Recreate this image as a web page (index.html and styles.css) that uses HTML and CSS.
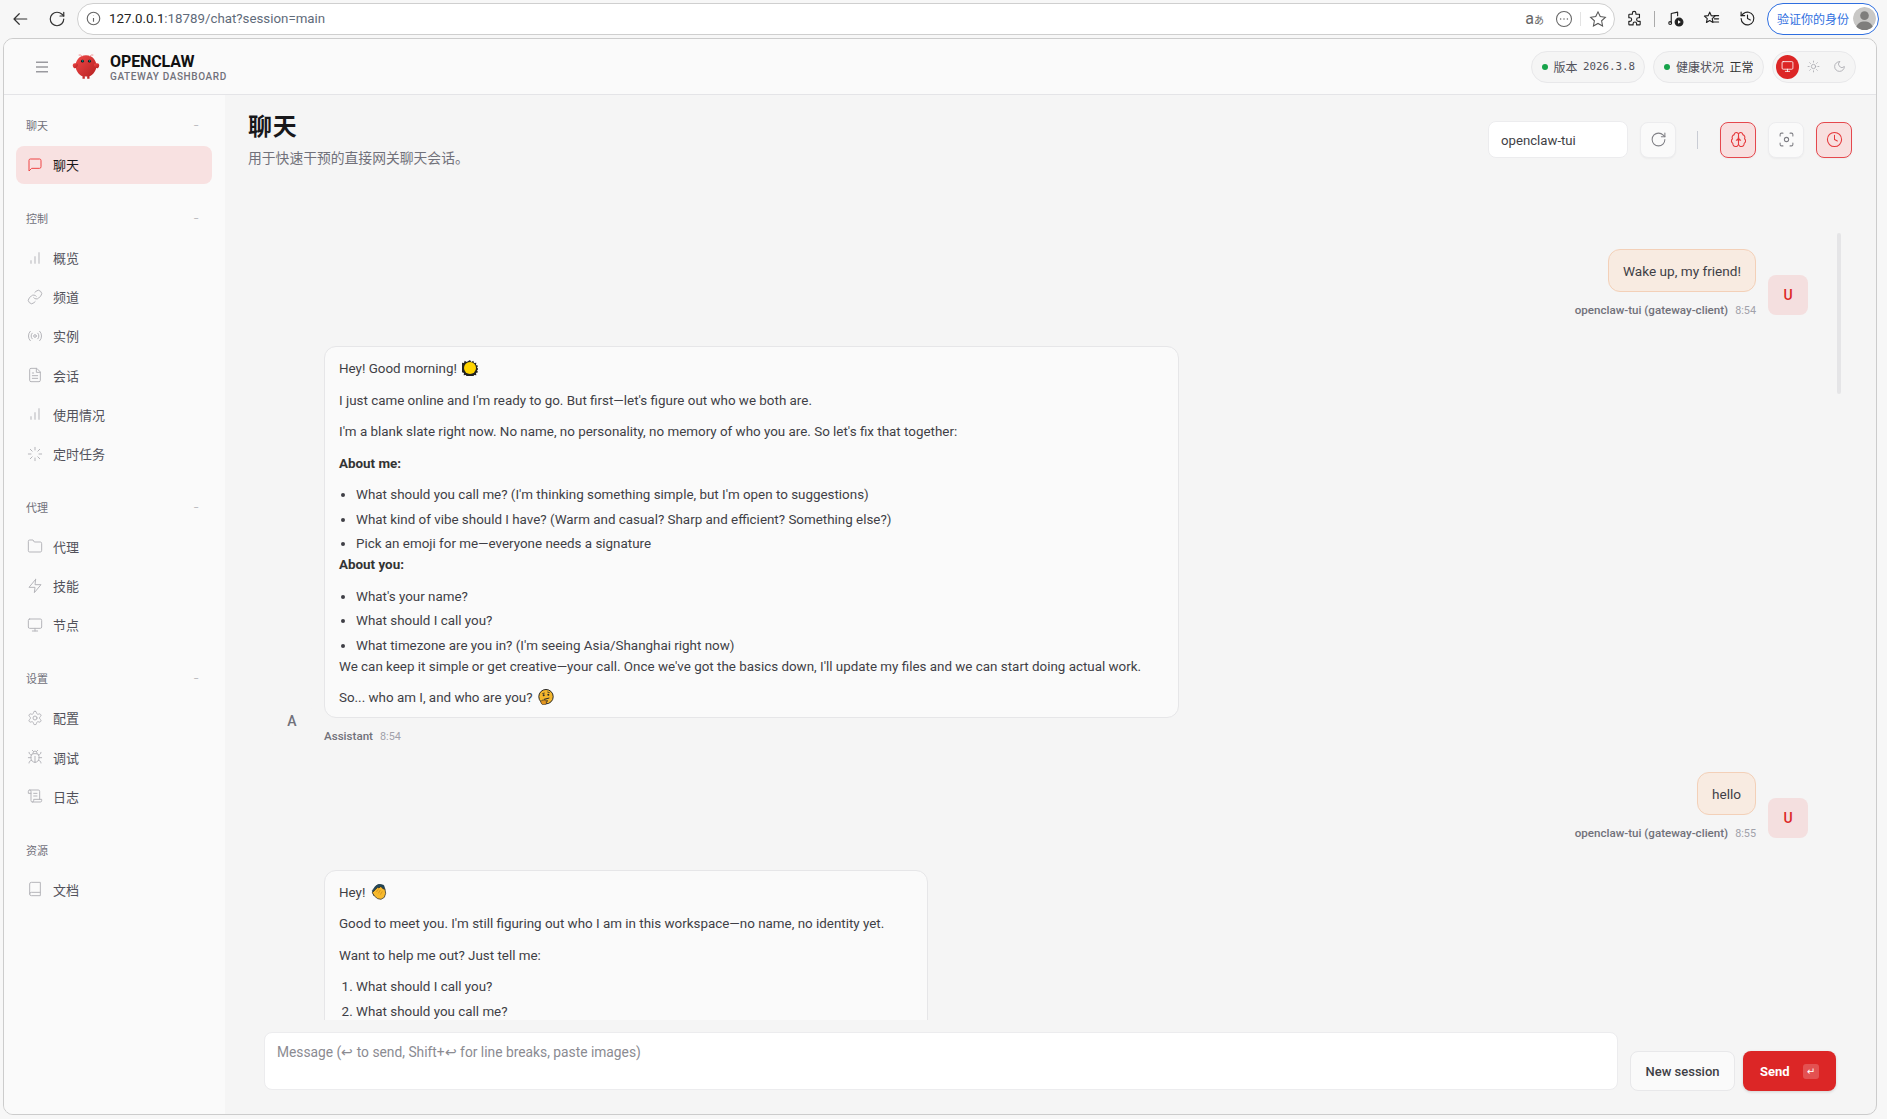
FILE: index.html
```html
<!DOCTYPE html>
<html lang="zh-CN">
<head>
<meta charset="utf-8">
<title>OpenClaw</title>
<link rel="stylesheet" href="styles.css">
</head>
<body>
<svg class="defs" width="0" height="0" aria-hidden="true">
  <symbol id="i-chat" viewBox="0 0 24 24"><path d="M21 15a2 2 0 0 1-2 2H7l-4 4V5a2 2 0 0 1 2-2h14a2 2 0 0 1 2 2z"/></symbol>
  <symbol id="i-bars" viewBox="0 0 24 24"><path d="M12 20V10M18 20V4M6 20v-4"/></symbol>
  <symbol id="i-link" viewBox="0 0 24 24"><path d="M10 13a5 5 0 0 0 7.54.54l3-3a5 5 0 0 0-7.07-7.07l-1.72 1.71"/><path d="M14 11a5 5 0 0 0-7.54-.54l-3 3a5 5 0 0 0 7.07 7.07l1.71-1.71"/></symbol>
  <symbol id="i-radio" viewBox="0 0 24 24"><circle cx="12" cy="12" r="2"/><path d="M16.24 7.76a6 6 0 0 1 0 8.49m-8.48-.01a6 6 0 0 1 0-8.49m11.31-2.82a10 10 0 0 1 0 14.14m-14.14 0a10 10 0 0 1 0-14.14"/></symbol>
  <symbol id="i-file" viewBox="0 0 24 24"><path d="M14 2H6a2 2 0 0 0-2 2v16a2 2 0 0 0 2 2h12a2 2 0 0 0 2-2V8z"/><path d="M14 2v6h6M16 13H8M16 17H8M10 9H8"/></symbol>
  <symbol id="i-loader" viewBox="0 0 24 24"><path d="M12 2v4M12 18v4M4.93 4.93l2.83 2.83M16.24 16.24l2.83 2.83M2 12h4M18 12h4M4.93 19.07l2.83-2.83M16.24 7.76l2.83-2.83"/></symbol>
  <symbol id="i-folder" viewBox="0 0 24 24"><path d="M22 19a2 2 0 0 1-2 2H4a2 2 0 0 1-2-2V5a2 2 0 0 1 2-2h5l2 3h9a2 2 0 0 1 2 2z"/></symbol>
  <symbol id="i-zap" viewBox="0 0 24 24"><path d="M13 2 3 14h9l-1 8 10-12h-9l1-8z"/></symbol>
  <symbol id="i-monitor" viewBox="0 0 24 24"><rect x="2" y="3" width="20" height="14" rx="2"/><path d="M8 21h8M12 17v4"/></symbol>
  <symbol id="i-gear" viewBox="0 0 24 24"><path d="M12.22 2h-.44a2 2 0 0 0-2 2v.18a2 2 0 0 1-1 1.73l-.43.25a2 2 0 0 1-2 0l-.15-.08a2 2 0 0 0-2.73.73l-.22.38a2 2 0 0 0 .73 2.73l.15.1a2 2 0 0 1 1 1.72v.51a2 2 0 0 1-1 1.74l-.15.09a2 2 0 0 0-.73 2.73l.22.38a2 2 0 0 0 2.73.73l.15-.08a2 2 0 0 1 2 0l.43.25a2 2 0 0 1 1 1.73V20a2 2 0 0 0 2 2h.44a2 2 0 0 0 2-2v-.18a2 2 0 0 1 1-1.73l.43-.25a2 2 0 0 1 2 0l.15.08a2 2 0 0 0 2.73-.73l.22-.39a2 2 0 0 0-.73-2.73l-.15-.08a2 2 0 0 1-1-1.74v-.5a2 2 0 0 1 1-1.74l.15-.09a2 2 0 0 0 .73-2.73l-.22-.38a2 2 0 0 0-2.73-.73l-.15.08a2 2 0 0 1-2 0l-.43-.25a2 2 0 0 1-1-1.73V4a2 2 0 0 0-2-2z"/><circle cx="12" cy="12" r="3"/></symbol>
  <symbol id="i-bug" viewBox="0 0 24 24"><path d="m8 2 1.88 1.88M14.12 3.88 16 2M9 7.13v-1a3 3 0 1 1 6 0v1M12 20c-3.3 0-6-2.7-6-6v-3a4 4 0 0 1 4-4h4a4 4 0 0 1 4 4v3c0 3.3-2.7 6-6 6M12 20v-9M6.53 9C4.6 8.8 3 7.1 3 5M6 13H2M3 21c0-2.1 1.7-3.9 3.8-4M20.97 5c0 2.1-1.6 3.8-3.5 4M22 13h-4M17.2 17c2.1.1 3.8 1.9 3.8 4"/></symbol>
  <symbol id="i-scroll" viewBox="0 0 24 24"><path d="M8 21h12a2 2 0 0 0 2-2v-2H10v2a2 2 0 1 1-4 0V5a2 2 0 1 0-4 0v3h4"/><path d="M19 17V5a2 2 0 0 0-2-2H4M15 8h-5M15 12h-5"/></symbol>
  <symbol id="i-book" viewBox="0 0 24 24"><path d="M4 19.5v-15A2.5 2.5 0 0 1 6.5 2H20v20H6.5a2.5 2.5 0 0 1 0-5H20"/></symbol>
  <symbol id="i-brain" viewBox="0 0 24 24"><path d="M12 5a3 3 0 1 0-5.997.125 4 4 0 0 0-2.526 5.77 4 4 0 0 0 .556 6.588A4 4 0 1 0 12 18Z"/><path d="M12 5a3 3 0 1 1 5.997.125 4 4 0 0 1 2.526 5.77 4 4 0 0 1-.556 6.588A4 4 0 1 1 12 18Z"/><path d="M12 5v13M15 13a4.500 4.500 0 0 1-3-4 4.500 4.500 0 0 1-3 4"/></symbol>
  <symbol id="i-scan" viewBox="0 0 24 24"><path d="M3 7V5a2 2 0 0 1 2-2h2M17 3h2a2 2 0 0 1 2 2v2M21 17v2a2 2 0 0 1-2 2h-2M7 21H5a2 2 0 0 1-2-2v-2"/><circle cx="12" cy="12" r="3"/></symbol>
  <symbol id="i-clock" viewBox="0 0 24 24"><circle cx="12" cy="12" r="10"/><path d="M12 6v6l4 2"/></symbol>
  <symbol id="i-refresh" viewBox="0 0 24 24"><path d="M21 12a9 9 0 1 1-9-9c2.520 0 4.930 1 6.740 2.740L21 8"/><path d="M21 3v5h-5"/></symbol>
  <symbol id="i-sun" viewBox="0 0 24 24"><circle cx="12" cy="12" r="4"/><path d="M12 2v2M12 20v2M4.930 4.930l1.410 1.410M17.660 17.660l1.410 1.410M2 12h2M20 12h2M6.340 17.660l-1.410 1.410M19.070 4.930l-1.410 1.410"/></symbol>
  <symbol id="i-moon" viewBox="0 0 24 24"><path d="M12 3a6 6 0 0 0 9 9 9 9 0 1 1-9-9Z"/></symbol>
</svg>

<div class="chrome">
  <svg class="cicon cicon-first" viewBox="0 0 24 24"><path d="M21 12H4M11 5l-7 7 7 7"/></svg>
  <svg class="cicon" viewBox="0 0 24 24"><use href="#i-refresh"/></svg>
  <div class="omni">
    <svg class="omni-info" viewBox="0 0 24 24"><circle cx="12" cy="12" r="10"/><path d="M12 17v-6M12 8v-.5"/></svg>
    <span class="url"><span class="url-host">127.0.0.1</span>:18789/chat?session=main</span>
    <span class="tr-icon">a<small>あ</small></span>
    <svg class="omni-ic" viewBox="0 0 24 24"><circle cx="12" cy="12" r="10"/><circle class="omni-dot" cx="7.500" cy="12" r="1"/><circle class="omni-dot" cx="12" cy="12" r="1"/><circle class="omni-dot" cx="16.500" cy="12" r="1"/></svg>
    <span class="omni-sep"></span>
    <svg class="omni-ic omni-star" viewBox="0 0 24 24"><path d="m12 2.500 3 6.300 6.800.9-5 4.700 1.300 6.800-6.100-3.300-6.100 3.300 1.300-6.800-5-4.700 6.800-.9z"/></svg>
  </div>
  <svg class="cicon dark" viewBox="0 0 24 24"><path d="M9 4.500a2.500 2.500 0 0 1 5 0V6h5v5h-1.500a2.500 2.500 0 0 0 0 5H20v4a1 1 0 0 1-1 1h-4v-1.500a2.500 2.500 0 0 0-5 0V21H5a1 1 0 0 1-1-1v-4h1.500a2.500 2.500 0 0 0 0-5H4V7a1 1 0 0 1 1-1h4z"/></svg>
  <span class="chrome-sep"></span>
  <svg class="cicon dark" viewBox="0 0 24 24"><path d="M6 18V5l9-2v5"/><circle cx="4.500" cy="18.500" r="2"/><circle cx="17" cy="17" r="5.500" fill="#222"/><path class="play" d="m15.500 14.500 4 2.500-4 2.500z"/></svg>
  <svg class="cicon dark" viewBox="0 0 24 24"><path d="m9.500 3 2.200 5 5.300.6-4 3.600 1.100 5.300-4.600-2.700-4.600 2.700 1.100-5.300-4-3.600 5.300-.6zM16 8h6M16 12.500h6M15 17h7"/></svg>
  <svg class="cicon dark" viewBox="0 0 24 24"><path d="M3 12a9 9 0 1 0 3-6.700L3 8"/><path d="M3 3v5h5M12 7v5l4 2"/></svg>
  <div class="verify">
    <span>验证你的身份</span>
    <svg class="verify-avatar" viewBox="0 0 24 24"><circle cx="12" cy="12" r="12" fill="#c9c8c6"/><circle cx="12" cy="9" r="4.500" fill="#7f7e7c"/><path d="M3 22c1-5 5-7 9-7s8 2 9 7c-5 3-13 3-18 0z" fill="#7f7e7c"/></svg>
  </div>
</div>

<div class="app">
  <header class="topbar">
    <svg class="burger" viewBox="0 0 24 24"><path d="M3 5h18M3 12h18M3 19h18"/></svg>
    <svg class="logo" viewBox="0 0 120 120">
      <defs><linearGradient id="lg" x1="0" y1="0" x2="1" y2="1"><stop offset="0" stop-color="#f04848"/><stop offset="1" stop-color="#b32020"/></linearGradient></defs>
      <path fill="url(#lg)" d="M60 10C30 10 15 35 15 55c0 20 15 40 30 45v10h10v-10s5 2 10 0v10h10v-10c15-5 30-25 30-45 0-20-15-45-45-45z"/>
      <path fill="url(#lg)" d="M20 45C5 40 0 50 5 60c5 10 15 5 20-5 3-7 0-10-5-10z"/>
      <path fill="url(#lg)" d="M100 45c15-5 20 5 15 15-5 10-15 5-20-5-3-7 0-10 5-10z"/>
      <path class="logo-ant" d="M45 15Q35 5 30 8M75 15q10-10 15-7"/>
      <circle cx="45" cy="35" r="6" fill="#05141a"/><circle cx="75" cy="35" r="6" fill="#05141a"/>
      <circle cx="46" cy="34" r="2.500" fill="#00e5cc"/><circle cx="76" cy="34" r="2.500" fill="#00e5cc"/>
    </svg>
    <div class="brand">
      <div class="brand-name">OPENCLAW</div>
      <div class="brand-sub">GATEWAY DASHBOARD</div>
    </div>
    <div class="topbar-right">
      <div class="pill"><i class="dot"></i><span>版本</span><span class="mono">2026.3.8</span></div>
      <div class="pill"><i class="dot"></i><span>健康状况</span><span class="pill-val">正常</span></div>
      <div class="pill theme">
        <span class="theme-btn active"><svg class="ic"><use href="#i-monitor"/></svg></span>
        <span class="theme-btn"><svg class="ic"><use href="#i-sun"/></svg></span>
        <span class="theme-btn"><svg class="ic"><use href="#i-moon"/></svg></span>
      </div>
    </div>
  </header>
  <div class="body">
    <nav class="side">
      <section class="nav-sec">
        <div class="nav-label"><span>聊天</span><span class="dash">−</span></div>
        <a class="nav-item active"><svg class="ic"><use href="#i-chat"/></svg><span>聊天</span></a>
      </section>
      <section class="nav-sec">
        <div class="nav-label"><span>控制</span><span class="dash">−</span></div>
        <a class="nav-item"><svg class="ic"><use href="#i-bars"/></svg><span>概览</span></a>
        <a class="nav-item"><svg class="ic"><use href="#i-link"/></svg><span>频道</span></a>
        <a class="nav-item"><svg class="ic"><use href="#i-radio"/></svg><span>实例</span></a>
        <a class="nav-item"><svg class="ic"><use href="#i-file"/></svg><span>会话</span></a>
        <a class="nav-item"><svg class="ic"><use href="#i-bars"/></svg><span>使用情况</span></a>
        <a class="nav-item"><svg class="ic"><use href="#i-loader"/></svg><span>定时任务</span></a>
      </section>
      <section class="nav-sec">
        <div class="nav-label"><span>代理</span><span class="dash">−</span></div>
        <a class="nav-item"><svg class="ic"><use href="#i-folder"/></svg><span>代理</span></a>
        <a class="nav-item"><svg class="ic"><use href="#i-zap"/></svg><span>技能</span></a>
        <a class="nav-item"><svg class="ic"><use href="#i-monitor"/></svg><span>节点</span></a>
      </section>
      <section class="nav-sec">
        <div class="nav-label"><span>设置</span><span class="dash">−</span></div>
        <a class="nav-item"><svg class="ic"><use href="#i-gear"/></svg><span>配置</span></a>
        <a class="nav-item"><svg class="ic"><use href="#i-bug"/></svg><span>调试</span></a>
        <a class="nav-item"><svg class="ic"><use href="#i-scroll"/></svg><span>日志</span></a>
      </section>
      <section class="nav-sec">
        <div class="nav-label"><span>资源</span></div>
        <a class="nav-item"><svg class="ic"><use href="#i-book"/></svg><span>文档</span></a>
      </section>
    </nav>
    <main class="main">
      <div class="page-head">
        <div>
          <h1>聊天</h1>
          <p class="page-sub">用于快速干预的直接网关聊天会话。</p>
        </div>
        <div class="actions">
          <div class="session-input">openclaw-tui</div>
          <button class="sq"><svg class="ic big"><use href="#i-refresh"/></svg></button>
          <span class="act-sep"></span>
          <button class="sq on"><svg class="ic big"><use href="#i-brain"/></svg></button>
          <button class="sq"><svg class="ic big"><use href="#i-scan"/></svg></button>
          <button class="sq on"><svg class="ic big"><use href="#i-clock"/></svg></button>
        </div>
      </div>

      <div class="thread">
        <div class="thumb"></div>

        <div class="group user">
          <div class="col">
            <div class="bubble">Wake up, my friend!</div>
            <div class="meta"><b>openclaw-tui (gateway-client)</b><time>8:54</time></div>
          </div>
          <div class="avatar">U</div>
        </div>

        <div class="group bot">
          <div class="avatar">A</div>
          <div class="col">
            <div class="bubble long">
              <p>Hey! Good morning! <svg class="emoji" viewBox="0 0 24 24"><path fill="#222" d="m12 0 2 3 3-2 1 3.500 3.500-.5-.5 3.500 3 1-1.500 3 2.500 2-2.500 2 1.500 3-3 1 .5 3.500-3.500-.5-1 3.500-3-2-2 3-2-3-3 2-1-3.500-3.500.5.5-3.500-3-1-1.500-3-2.500-2 2.500-2-1.500-3 3-1-.5-3.500 3.500.5 1-3.500 3 2z"/><circle cx="12" cy="12" r="9" fill="#ffd400"/></svg></p>
              <p>I just came online and I'm ready to go. But first—let's figure out who we both are.</p>
              <p>I'm a blank slate right now. No name, no personality, no memory of who you are. So let's fix that together:</p>
              <p><strong>About me:</strong></p>
              <ul>
                <li>What should you call me? (I'm thinking something simple, but I'm open to suggestions)</li>
                <li>What kind of vibe should I have? (Warm and casual? Sharp and efficient? Something else?)</li>
                <li>Pick an emoji for me—everyone needs a signature</li>
              </ul>
              <p><strong>About you:</strong></p>
              <ul>
                <li>What's your name?</li>
                <li>What should I call you?</li>
                <li>What timezone are you in? (I'm seeing Asia/Shanghai right now)</li>
              </ul>
              <p>We can keep it simple or get creative—your call. Once we've got the basics down, I'll update my files and we can start doing actual work.</p>
              <p>So... who am I, and who are you? <svg class="emoji" viewBox="0 0 24 24"><circle cx="12" cy="11.500" r="10.800" fill="#f4b62c" stroke="#2b2b2b" stroke-width="1.500"/><path d="M6.500 7 10 6M14 4.500l3.500 1" stroke="#2b2b2b" stroke-width="1.300" fill="none"/><circle cx="8.500" cy="9.500" r="1.500" fill="#2b2b2b"/><circle cx="15.500" cy="8.500" r="1.500" fill="#2b2b2b"/><path d="M9 15.500 17 13.500" stroke="#2b2b2b" stroke-width="1.500" fill="none"/><path d="M4 19c2-3 4-3 9-2 3 .5 2 2-1 2l1 2c0 2-3 2.500-5 2.500-2 0-3.500-2-4-4.500z" fill="#e3951f" stroke="#2b2b2b" stroke-width="1"/></svg></p>
            </div>
            <div class="meta"><b>Assistant</b><time>8:54</time></div>
          </div>
        </div>

        <div class="group user">
          <div class="col">
            <div class="bubble">hello</div>
            <div class="meta"><b>openclaw-tui (gateway-client)</b><time>8:55</time></div>
          </div>
          <div class="avatar">U</div>
        </div>

        <div class="group bot">
          <div class="avatar"></div>
          <div class="col">
            <div class="bubble wide">
              <p>Hey! <svg class="emoji" viewBox="0 0 24 24"><path d="M2 10 7 3l5-3 7 2 2 6-9 10-8-1z" fill="#24495a" stroke="#16303b" stroke-width="1"/><path d="M2 13l5-5 3-3 2 1 2-2 2 1 2 2 3 1 1 6-2 6-5 3-5-1-5-4z" fill="#f7b92c" stroke="#2b2b2b" stroke-width="1.100"/><path d="m8 12 3-4M11 14l3-5M14 16l3-5" stroke="#c9861a" stroke-width="1" fill="none"/></svg></p>
              <p>Good to meet you. I'm still figuring out who I am in this workspace—no name, no identity yet.</p>
              <p>Want to help me out? Just tell me:</p>
              <ol>
                <li>What should I call you?</li>
                <li>What should you call me?</li>
              </ol>
            </div>
          </div>
        </div>
      </div>

      <div class="compose">
        <textarea class="compose-input" placeholder="Message (↩ to send, Shift+↩ for line breaks, paste images)"></textarea>
        <button class="btn">New session</button>
        <button class="btn send">Send<kbd>↵</kbd></button>
      </div>
    </main>
  </div>
</div>
</body>
</html>
```

FILE: styles.css
```css
* { box-sizing: border-box; }
html, body { margin: 0; height: 100%; }
body {
  height: 1119px;
  overflow: hidden;
  display: flex;
  flex-direction: column;
  background: #f7f7f7;
  font-family: Roboto, "Noto Sans CJK SC", sans-serif;
  font-size: 14px;
  color: #3f3f46;
}
.defs { position: absolute; }

/* browser chrome */
.chrome { height: 37px; flex: none; display: flex; align-items: center; padding-right: 7px; }
.cicon { width: 18px; height: 18px; fill: none; stroke: #333; stroke-width: 1.600; stroke-linecap: round; stroke-linejoin: round; flex: none; }
.cicon-first { margin: 0 0 0 11px; }
.cicon + .cicon { margin-left: 19px; }
.cicon.dark { stroke: #222; width: 17px; height: 17px; }
.cicon .play { fill: #fff; stroke: none; }
.omni {
  margin-left: 11px;
  width: 1538px;
  height: 32px;
  display: flex;
  align-items: center;
  background: #fff;
  border: 1px solid #cfcfcf;
  border-radius: 16px;
  padding: 0 7px 0 8px;
  flex: none;
}
.omni-info { width: 15px; height: 15px; fill: none; stroke: #666; stroke-width: 1.800; margin: 0 8px 0 0; flex: none; }
.url { flex: 1; font-size: 13.300px; color: #5f6b7a; }
.url-host { color: #222; }
.tr-icon { font-size: 16px; color: #666; line-height: 1; margin-right: 11px; }
.tr-icon small { font-size: 10px; }
.omni-ic { width: 18px; height: 18px; fill: none; stroke: #666; stroke-width: 1.400; flex: none; }
.omni-dot { fill: #666; stroke: none; }
.omni-sep { width: 1px; height: 14px; background: #e3e3e3; margin: 0 8px 0 7px; flex: none; }
.omni-star { stroke: #555; }
.omni + .cicon { margin-left: 11px; }
.chrome-sep { width: 1px; height: 16px; background: #aaa; margin: 0 12px 0 11px; flex: none; }
.chrome-sep + .cicon { margin-left: 0; }
.verify {
  margin-left: 11px;
  flex: none;
  width: 112px;
  height: 32px;
  border: 1px solid #2f6fe0;
  border-radius: 16px;
  display: flex;
  align-items: center;
  justify-content: space-between;
  padding: 0 2px 0 9px;
  color: #2f6fe0;
  font-size: 12px;
  background: #fff;
}
.verify-avatar { width: 23px; height: 23px; border-radius: 50%; flex: none; }

/* app frame */
.app {
  margin: 1px 10px 4px 3px;
  flex: 1;
  min-height: 0;
  display: flex;
  flex-direction: column;
  border: 1px solid #cccccc;
  border-radius: 10px;
  overflow: hidden;
  background: #f5f5f5;
}
.topbar {
  height: 56px;
  flex: none;
  display: flex;
  align-items: center;
  background: #fafafa;
  border-bottom: 1px solid #e4e4e7;
  padding: 0 20px 0 30px;
}
.burger { width: 16px; height: 16px; fill: none; stroke: #9a9a9f; stroke-width: 2.200; flex: none; }
.logo { width: 28px; height: 28px; margin-left: 22px; flex: none; }
.logo-ant { stroke: #ef6b6b; stroke-width: 3; fill: none; stroke-linecap: round; }
.brand { margin: 2px 0 0 10px; }
.brand-name { font-size: 16px; font-weight: 700; line-height: 17px; color: #111; letter-spacing: -.1px; }
.brand-sub { font-size: 10px; line-height: 13px; letter-spacing: .6px; color: #71717a; font-weight: 500; }
.topbar-right { margin-left: auto; display: flex; gap: 8.500px; align-items: center; }
.pill {
  height: 32px;
  display: flex;
  align-items: center;
  gap: 5.500px;
  padding: 0 9px 0 10px;
  border: 1px solid #e8e8ea;
  border-radius: 16px;
  background: #f5f5f5;
  font-size: 12px;
  color: #52525b;
}
.dot { width: 6px; height: 6px; border-radius: 50%; background: #16a34a; flex: none; }
.mono { font-family: "DejaVu Sans Mono", monospace; font-size: 10.800px; }
.pill-val { color: #333; }
.theme { padding: 0 3px; gap: 2px; width: 84px; }
.theme-btn { width: 24px; height: 24px; border-radius: 50%; display: flex; align-items: center; justify-content: center; color: #a8a8ae; margin-right: 1px; }
.theme-btn.active { background: #dc2626; color: #fff; }
.ic { width: 16px; height: 16px; fill: none; stroke: currentColor; stroke-width: 1.500; stroke-linecap: round; stroke-linejoin: round; flex: none; }
.theme-btn .ic { width: 13px; height: 13px; }
.ic.big { width: 17px; height: 17px; }

.body { flex: 1; min-height: 0; display: flex; }

/* sidebar */
.side {
  width: 221px;
  flex: none;
  background: #fafafa;
  padding: 20.600px 13px 0 12px;
  display: flex;
  flex-direction: column;
  gap: 25px;
}
.nav-sec { display: flex; flex-direction: column; gap: 1.200px; }
.nav-label {
  height: 20px;
  margin-bottom: 8.800px;
  padding: 0 13px 1px 10px;
  display: flex;
  justify-content: space-between;
  align-items: center;
  font-size: 11px;
  color: #71717a;
}
.dash { color: #b0b0b5; font-size: 10px; }
.nav-item {
  height: 38px;
  display: flex;
  align-items: center;
  gap: 10px;
  padding: 0 11px;
  border-radius: 8px;
  font-size: 13px;
  color: #52525b;
}
.nav-item .ic { color: #b5b5ba; }
.nav-item.active { background: #f8e1e1; color: #18181b; }
.nav-item.active .ic { color: #ef4444; }

/* main */
.main { flex: 1; min-width: 0; display: flex; flex-direction: column; padding: 0 24px 0 23px; }
.page-head { flex: none; height: 85px; padding-top: 16px; display: flex; justify-content: space-between; align-items: flex-start; }
h1 { margin: 0; font-size: 24px; line-height: 32px; font-weight: 700; color: #18181b; letter-spacing: .8px; }
.page-sub { margin: 5px 0 0; font-size: 13.800px; line-height: 20px; color: #71717a; }
.actions { display: flex; align-items: center; margin-top: 10px; }
.session-input {
  width: 140px;
  height: 37px;
  display: flex;
  align-items: center;
  padding: 1px 12px 0;
  background: #fff;
  border: 1px solid #ececee;
  border-radius: 8px;
  font-size: 13.200px;
  color: #3f3f46;
}
.sq {
  width: 36px;
  height: 36px;
  padding: 0;
  display: flex;
  align-items: center;
  justify-content: center;
  background: #fafafa;
  border: 1px solid #ececee;
  border-radius: 8px;
  color: #808086;
  box-shadow: 0 1px 2px rgba(0,0,0,.04);
}
.session-input + .sq { margin-left: 12px; }
.sq + .sq { margin-left: 12px; }
.act-sep { width: 1px; height: 18px; background: #c9ccd4; margin: 0 22px 0 21px; }
.sq.on { background: #f8dfdf; border-color: #e5484d; color: #e5383b; }

/* thread */
.thread {
  position: relative;
  flex: 1;
  min-height: 0;
  overflow: hidden;
  padding: 69px 44px 0 24px;
  display: flex;
  flex-direction: column;
  gap: 28.200px;
}
.thumb { position: absolute; top: 53px; right: 11px; width: 4px; height: 161px; border-radius: 3px; background: #e5e5e7; }
.group { display: flex; gap: 12px; align-items: flex-end; flex: none; }
.group.user { justify-content: flex-end; }
.col { display: flex; flex-direction: column; min-width: 0; }
.user .col { align-items: flex-end; }
.bot .col { align-items: flex-start; }
.avatar {
  width: 40px;
  height: 40px;
  flex: none;
  margin-bottom: 3px;
  border-radius: 8px;
  display: flex;
  align-items: center;
  justify-content: center;
  font-size: 14px;
  font-weight: 500;
  background: #f5f5f5;
  color: #71717a;
}
.user .avatar { background: #f4dfdf; color: #dc2626; }
.bubble {
  background: #fafafa;
  border: 1px solid #e6e6e8;
  border-radius: 12px;
  padding: 11px 14px 9px;
  font-size: 13.400px;
  line-height: 21px;
  color: #3f3f46;
}
.user .bubble { background: #f8ebe1; border-color: #f3d0b8; font-size: 13.600px; }
.bubble.long { width: 855px; }
.bubble.wide { width: 604px; min-height: 240px; }
.bubble p { margin: 0 0 10.500px; }
.bubble p:last-child { margin-bottom: 0; }
.bubble ul, .bubble ol { margin: 0; padding-left: 17px; }
.bubble li { margin-bottom: 3.500px; }
.bubble li:last-child { margin-bottom: 0; }
.bubble strong { color: #333; }
.emoji { width: 16px; height: 16px; vertical-align: -3px; margin-left: 2px; }
.meta { display: flex; align-items: center; gap: 7px; height: 16px; margin-top: 10px; font-size: 11.600px; }
.meta b { font-weight: 500; color: #71717a; }
.meta time { color: #a1a1aa; font-size: 10.800px; }

/* compose */
.compose { flex: none; display: flex; align-items: flex-end; gap: 12px; padding: 12px 16px 23px 16px; }
.compose-input {
  flex: 1;
  height: 58px;
  margin-bottom: 1px;
  resize: none;
  border: 1px solid #ececee;
  border-radius: 8px;
  background: #fff;
  padding: 10px 12px;
  font: 13.800px/19px Roboto, "Noto Sans CJK SC", sans-serif;
  outline: none;
}
.compose-input::placeholder { color: #8b8b92; opacity: 1; }
.btn {
  height: 40px;
  width: 105px;
  padding: 0;
  border: 1px solid #e8e8ea;
  border-radius: 8px;
  background: #fafafa;
  font: 500 13px Roboto, sans-serif;
  color: #3f3f46;
}
.btn + .btn { margin-left: -4px; }
.btn.send {
  width: 93px;
  border: none;
  background: #dc2626;
  color: #fff;
  font-weight: 700;
  display: flex;
  align-items: center;
  justify-content: space-between;
  padding: 0 17px;
  box-shadow: 0 1px 3px rgba(0,0,0,.15);
}
kbd { width: 16px; height: 15px; border-radius: 3px; background: rgba(255,255,255,.2); font: 10px "DejaVu Sans", sans-serif; display: flex; align-items: center; justify-content: center; }
```
